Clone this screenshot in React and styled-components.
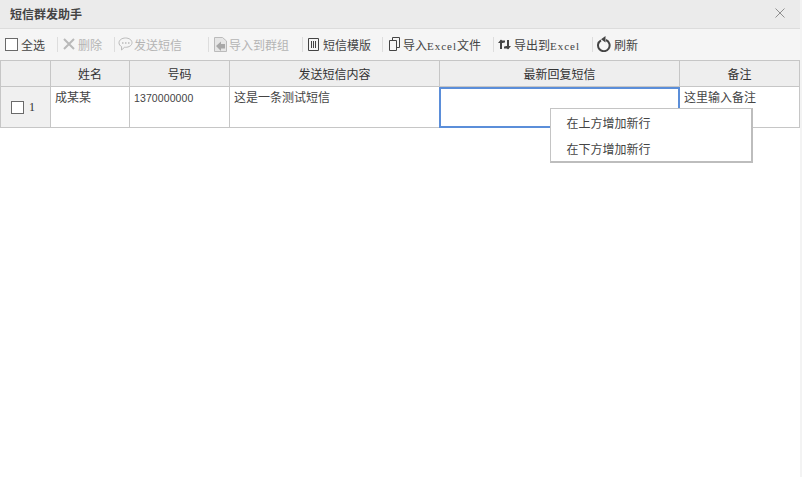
import React from "react";
import styled, { createGlobalStyle } from "styled-components";

const Global = createGlobalStyle`
  html, body { margin: 0; padding: 0; background: #fff; }
  #root { height: 477px; }
  * { box-sizing: border-box; }
`;
const Page = styled.div`
  position: relative; width: 802px; height: 477px; overflow: hidden; background: #fff;
  border-right: 2px solid #f3f3f3;
  font-family: "Noto Sans CJK SC", "Liberation Sans", sans-serif; font-size: 12px; color: #333;
`;
const TitleBar = styled.div`
  height: 29px; background: #ebebeb; border-bottom: 1px solid #dcdcdc;
  display: flex; align-items: center; justify-content: space-between; padding: 0 15px 1px 10px;
`;
const Title = styled.div`font-size: 12px; font-weight: 700; color: #444;`;
const Close = styled.svg`width: 10px; height: 10px; display: block; margin-top: -2px;`;
const Toolbar = styled.div`
  height: 31px; background: #f5f5f5; display: flex; align-items: center; padding-bottom: 1px;
`;
const Tool = styled.div`
  display: flex; align-items: center; gap: ${p => p.$gap ?? 2}px; white-space: nowrap;
  width: ${p => p.$w}px; flex: none; color: ${p => (p.$off ? "#b4b4b4" : "#444")};
  svg { flex: none; display: block; }
`;
const SelectAll = styled(Tool)`padding-left: 5px;`;
const Sep = styled.i`width: 1px; height: 15px; background: #dddddd; flex: none; margin-right: ${p => p.$mr ?? 5}px;`;
const Latin = styled.span`font-family: "Liberation Serif", serif; font-size: 11px; letter-spacing: 1px;`;
const Check = styled.span`
  display: block; flex: none; width: ${p => p.$s}px; height: ${p => p.$s}px;
  border: 1px solid #6a6a6a; background: #fff;
`;
const Grid = styled.div`
  display: grid; grid-template-columns: 51px 79px 100px 210px 240px 120px; width: 800px;
  grid-template-rows: 27px 41px;
`;
const Head = styled.div`
  background: #eeeeee; border: solid #c6c6c6; border-width: 1px 1px 1px 0;
  &:first-child { border-left: 1px solid #c6c6c6; }
  display: flex; align-items: center; justify-content: center; color: #333; font-size: 12px; padding-bottom: 1px;
`;
const Cell = styled.div`
  border: solid #c6c6c6; border-width: 0 1px 1px 0; padding: 1px 4px; font-size: 12px; color: #444; line-height: 17px;
  background: #fff;
`;
const Lead = styled.div`
  background: #f0f0f0; border: solid #c6c6c6; border-width: 0 1px 1px 1px;
  display: flex; align-items: center; gap: 5px; padding: 0 0 0 10px;
`;
const RowNo = styled.span`font-family: "Liberation Serif", serif; font-size: 12px; color: #333;`;
const Num = styled.span`font-family: "Liberation Sans", sans-serif; font-size: 10.500px; letter-spacing: .1px;`;
const Active = styled.div`
  border: 2px solid #5b8ed9; margin: 0 0 0 -1px; background: #fff;
`;
const Menu = styled.div`
  position: absolute; left: 550px; top: 108px; width: 203px; height: 55px;
  background: #fff; border: 1px solid #c4c4c4; border-right: 2px solid #bdbdbd; border-bottom: 2px solid #bdbdbd;
  display: flex; flex-direction: column; padding-top: 1px;
`;
const MenuItem = styled.div`height: 26px; padding-left: 15.500px; display: flex; align-items: center; color: #444; font-size: 12px;`;

const s = { fill: "none", stroke: "currentColor" };
export default function App() {
  return (
    <Page>
      <Global />
      <TitleBar>
        <Title>短信群发助手</Title>
        <Close viewBox="0 0 10 10"><path d="M.5.5l9 9M9.5.5l-9 9" stroke="#8f8f8f" fill="none" /></Close>
      </TitleBar>
      <Toolbar>
        <SelectAll $w={57} $gap={3}><Check $s={13} />全选</SelectAll>
        <Sep />
        <Tool $off $w={51} $gap={3}>
          <svg width="12" height="12" viewBox="0 0 12 12"><path d="M1 1l10 10M11 1L1 11" stroke="#b9b9b9" strokeWidth="2" fill="none" /></svg>
          删除
        </Tool>
        <Sep $mr={3} />
        <Tool $off $w={90} $gap={1}>
          <svg width="15" height="14" viewBox="0 0 15 14"><path d="M7.500 1C3.900 1 1 3 1 5.800c0 1.700 1 3 2.600 3.800L3.500 13l3-2.700h1C11.100 10.300 14 8.400 14 5.700S11.100 1 7.500 1z" {...s} color="#bbb" /><path d="M4 6h1.500M7 6h1.500M10 6h1.500" stroke="#bbb" strokeWidth="1.500" fill="none" /></svg>
          发送短信
        </Tool>
        <Sep $mr={5} />
        <Tool $off $w={88} $gap={2}>
          <svg width="13" height="16" viewBox="0 0 13 16"><path d="M.5 1.500h8l4 3.500v10.500H.5z" fill="#e6e6e6" stroke="#bbb" /><path d="M2 10l5-4.500V8h4v4.500H7V15z" fill="#a8a8a8" /></svg>
          导入到群组
        </Tool>
        <Sep />
        <Tool $w={74} $gap={4}>
          <svg width="11" height="13" viewBox="0 0 11 13"><path d="M.5.500h10v12H.5zM3.500 3v7M5.500 3v7M7.500 3v7" {...s} color="#444" /></svg>
          短信模版
        </Tool>
        <Sep $mr={6} />
        <Tool $w={104} $gap={3}>
          <svg width="11" height="14" viewBox="0 0 11 14"><path d="M3.500 3V.500h7v10H8M.5 3.500h7v10H.5z" {...s} color="#444" /></svg>
          <span>导入<Latin>Excel</Latin>文件</span>
        </Tool>
        <Sep $mr={4} />
        <Tool $w={94} $gap={3}>
          <svg width="13" height="11" viewBox="0 0 13 11"><path d="M3 10V2.500h4M10 1v7.500H6" fill="none" stroke="#444" strokeWidth="2" /><path d="M0 4l3-3.500L6 4zM7 7l3 3.500L13 7z" fill="#444" /></svg>
          <span>导出到<Latin>Excel</Latin></span>
        </Tool>
        <Sep $mr={4} />
        <Tool $gap={2}>
          <svg width="15" height="16" viewBox="0 0 15 16"><path d="M4 4.300a5.800 5.800 0 1 0 5-.3" fill="none" stroke="#444" strokeWidth="2" /><path d="M8.500 0v6.500L4 3.300z" fill="#444" /></svg>
          刷新
        </Tool>
      </Toolbar>
      <Grid>
        <Head />
        <Head>姓名</Head>
        <Head>号码</Head>
        <Head>发送短信内容</Head>
        <Head>最新回复短信</Head>
        <Head>备注</Head>
        <Lead><Check $s={13} /><RowNo>1</RowNo></Lead>
        <Cell>成某某</Cell>
        <Cell><Num>1370000000</Num></Cell>
        <Cell>这是一条测试短信</Cell>
        <Active />
        <Cell>这里输入备注</Cell>
      </Grid>
      <Menu>
        <MenuItem>在上方增加新行</MenuItem>
        <MenuItem>在下方增加新行</MenuItem>
      </Menu>
    </Page>
  );
}
